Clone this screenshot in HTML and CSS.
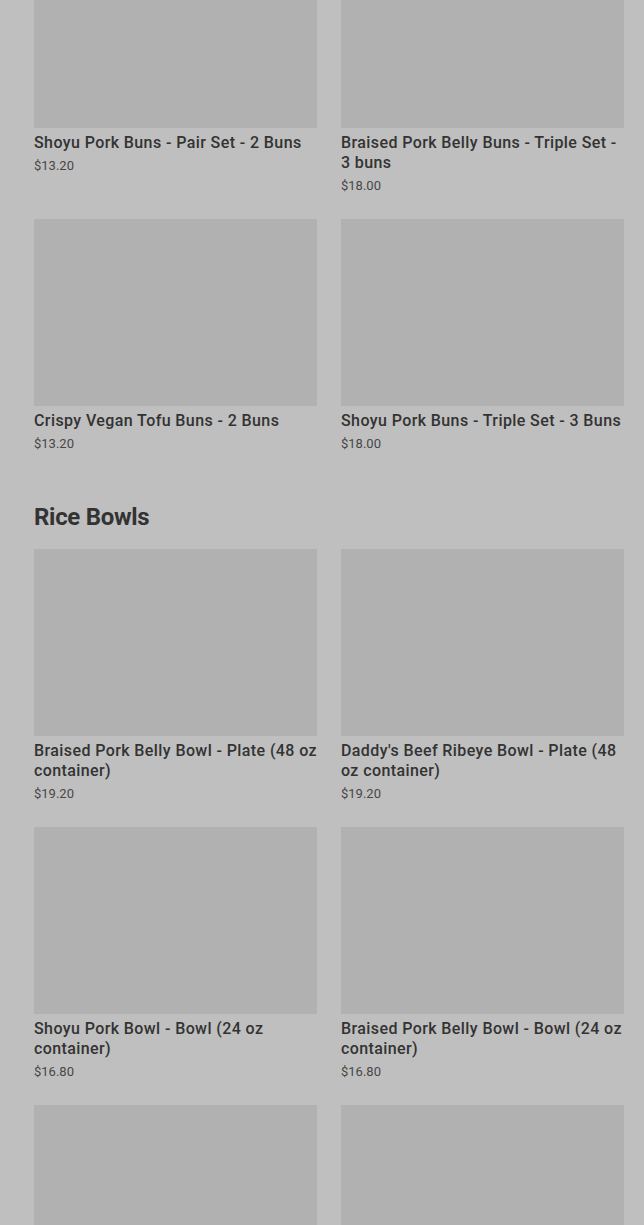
FILE: index.html
```html
<!DOCTYPE html>
<html lang="en">
<head>
    <meta charset="UTF-8">
    <meta name="viewport" content="width=device-width, initial-scale=1.0">
    <title>Menu</title>
    <link rel="stylesheet" href="styles.css">
</head>
<body>
    <div class="menu">
        <div class="section">
            <div class="item-grid">
                <div class="item">
                    <div class="item-image"></div>
                    <div class="item-title">Shoyu Pork Buns - Pair Set - 2 Buns</div>
                    <div class="item-price">$13.20</div>
                </div>
                <div class="item">
                    <div class="item-image"></div>
                    <div class="item-title">Braised Pork Belly Buns - Triple Set - 3 buns</div>
                    <div class="item-price">$18.00</div>
                </div>
                <div class="item">
                    <div class="item-image"></div>
                    <div class="item-title">Crispy Vegan Tofu Buns - 2 Buns</div>
                    <div class="item-price">$13.20</div>
                </div>
                <div class="item">
                    <div class="item-image"></div>
                    <div class="item-title">Shoyu Pork Buns - Triple Set - 3 Buns</div>
                    <div class="item-price">$18.00</div>
                </div>
            </div>
        </div>

        <div class="section">
            <h2 class="section-title">Rice Bowls</h2>
            <div class="item-grid">
                <div class="item">
                    <div class="item-image"></div>
                    <div class="item-title">Braised Pork Belly Bowl - Plate (48 oz container)</div>
                    <div class="item-price">$19.20</div>
                </div>
                <div class="item">
                    <div class="item-image"></div>
                    <div class="item-title">Daddy's Beef Ribeye Bowl - Plate (48 oz container)</div>
                    <div class="item-price">$19.20</div>
                </div>
                <div class="item">
                    <div class="item-image"></div>
                    <div class="item-title">Shoyu Pork Bowl - Bowl (24 oz container)</div>
                    <div class="item-price">$16.80</div>
                </div>
                <div class="item">
                    <div class="item-image"></div>
                    <div class="item-title">Braised Pork Belly Bowl - Bowl (24 oz container)</div>
                    <div class="item-price">$16.80</div>
                </div>
                <div class="item">
                    <div class="item-image"></div>
                </div>
                <div class="item">
                    <div class="item-image"></div>
                </div>
            </div>
        </div>
    </div>
</body>
</html>
```

FILE: styles.css
```css
body { margin: 0; background: #bfbfbf; font-family: Roboto, 'Liberation Sans', Arial, sans-serif; color: #2e2e2e; overflow: hidden; }
.menu { padding: 0 20px 0 34px; margin-top: -59px; }
.section + .section { margin-top: 48px; }
.section-title { margin: 0 0 16px 0; font-size: 24px; line-height: 32px; font-weight: 700; letter-spacing: -0.3px; color: #333; }
.item-grid { display: grid; grid-template-columns: 1fr 1fr; column-gap: 24px; row-gap: 24px; }
.item-image { height: 187px; background: #b1b1b1; }
.item-title { margin-top: 5px; font-size: 16px; line-height: 20px; font-weight: 500; letter-spacing: 0.4px; color: #333; }
.item-price { margin-top: 3px; font-size: 13px; line-height: 19px; color: #474747; }
```
